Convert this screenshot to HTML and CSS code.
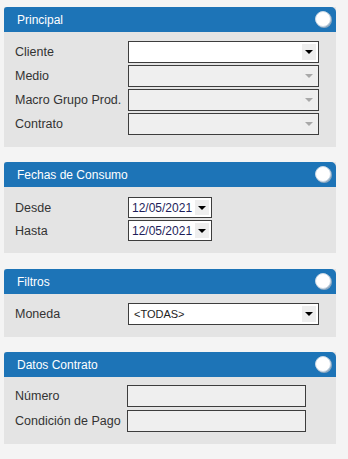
FILE: index.html
```html
<!DOCTYPE html>
<html lang="es">

<head>
    <meta charset="UTF-8">
    <meta name="viewport" content="width=device-width, initial-scale=1.0">
    <title>Consulta de Consumos</title>
    <link rel="stylesheet" href="styles.css">
</head>

<body>
    <div class="page">
        <!-- Principal -->
        <div class="panel">
            <div class="panel-head">
                <span>Principal</span>
                <span class="toggle"></span>
            </div>
            <div class="panel-body form p1">
                <label>Cliente</label>
                <div class="combo wide"><span class="value"></span><span class="arrow"></span></div>
                <label>Medio</label>
                <div class="combo wide disabled"><span class="value"></span><span class="arrow"></span></div>
                <label>Macro Grupo Prod.</label>
                <div class="combo wide disabled"><span class="value"></span><span class="arrow"></span></div>
                <label>Contrato</label>
                <div class="combo wide disabled"><span class="value"></span><span class="arrow"></span></div>
            </div>
        </div>

        <!-- Fechas -->
        <div class="panel fechas">
            <div class="panel-head">
                <span>Fechas de Consumo</span>
                <span class="toggle"></span>
            </div>
            <div class="panel-body form p2">
                <label>Desde</label>
                <div class="combo date"><span class="value">12/05/2021</span><span class="arrow"></span></div>
                <label>Hasta</label>
                <div class="combo date"><span class="value">12/05/2021</span><span class="arrow"></span></div>
            </div>
        </div>

        <!-- Filtros -->
        <div class="panel">
            <div class="panel-head">
                <span>Filtros</span>
                <span class="toggle"></span>
            </div>
            <div class="panel-body form p3">
                <label>Moneda</label>
                <div class="combo wide"><span class="value small">&lt;TODAS&gt;</span><span class="arrow"></span></div>
            </div>
        </div>

        <!-- Datos Contrato -->
        <div class="panel">
            <div class="panel-head">
                <span>Datos Contrato</span>
                <span class="toggle"></span>
            </div>
            <div class="panel-body form p4">
                <label>Número</label>
                <div class="field"></div>
                <label>Condición de Pago</label>
                <div class="field"></div>
            </div>
        </div>
    </div>
</body>

</html>
```

FILE: styles.css
```css
body {
    margin: 0;
    background: #f4f4f4;
    font-family: 'Liberation Sans', Arial, sans-serif;
    color: #333333;
}

.page {
    padding: 7px 0 0 4px;
    width: 332px;
}

.panel {
    margin-bottom: 15px;
    background: #e4e4e4;
}

.panel.fechas {
    margin-bottom: 16px;
}

.panel-head {
    height: 25px;
    background: #1d74b7;
    color: #ffffff;
    font-size: 12px;
    border-radius: 3px 5px 0 0;
    display: flex;
    align-items: center;
    justify-content: space-between;
    padding: 0 5px 0 13px;
}

.toggle {
    width: 14px;
    height: 14px;
    border-radius: 50%;
    background: #ffffff;
    border: 1px solid #c9d8e6;
    box-shadow: 1px 1px 0 #8fa9c0;
    margin-top: -1px;
}

/* filas de formulario */
.form {
    display: grid;
    grid-template-columns: 113px auto;
    align-items: center;
    justify-items: start;
    padding-left: 11px;
    font-size: 12.5px;
}

.form label {
    color: #333333;
}

.p1 {
    padding-top: 9px;
    padding-bottom: 12px;
    row-gap: 2px;
}

.p2 {
    padding-top: 10px;
    padding-bottom: 12px;
    row-gap: 2px;
}

.p3 {
    padding-top: 9px;
    padding-bottom: 12px;
}

.p4 {
    padding-top: 8px;
    padding-bottom: 12px;
    row-gap: 3px;
    grid-template-columns: 112px auto;
}

.combo {
    box-sizing: border-box;
    height: 22px;
    border: 1px solid #3d3d3d;
    background: #ffffff;
    display: flex;
    align-items: stretch;
    padding: 2px;
}

.combo.wide {
    width: 191px;
}

.combo .value {
    flex: 1;
    display: flex;
    align-items: center;
    padding-left: 3px;
    font-size: 12px;
    color: #222222;
}

.combo .value.small {
    font-size: 11px;
}

.combo .arrow {
    width: 14px;
    background: #eeeeee;
    display: flex;
    align-items: center;
    justify-content: center;
}

.combo .arrow::after {
    content: '';
    border-left: 4px solid transparent;
    border-right: 4px solid transparent;
    border-top: 4px solid #000000;
}

.combo.disabled {
    background: #efefef;
}

.combo.disabled .arrow::after {
    border-top-color: #a8a8a8;
}

.combo.date {
    width: 84px;
    height: 21px;
}

.combo.date .value {
    padding-left: 1px;
    color: #1e1e5a;
}

.field {
    box-sizing: border-box;
    width: 179px;
    height: 22px;
    border: 1px solid #3d3d3d;
    background: #efefef;
}
```
